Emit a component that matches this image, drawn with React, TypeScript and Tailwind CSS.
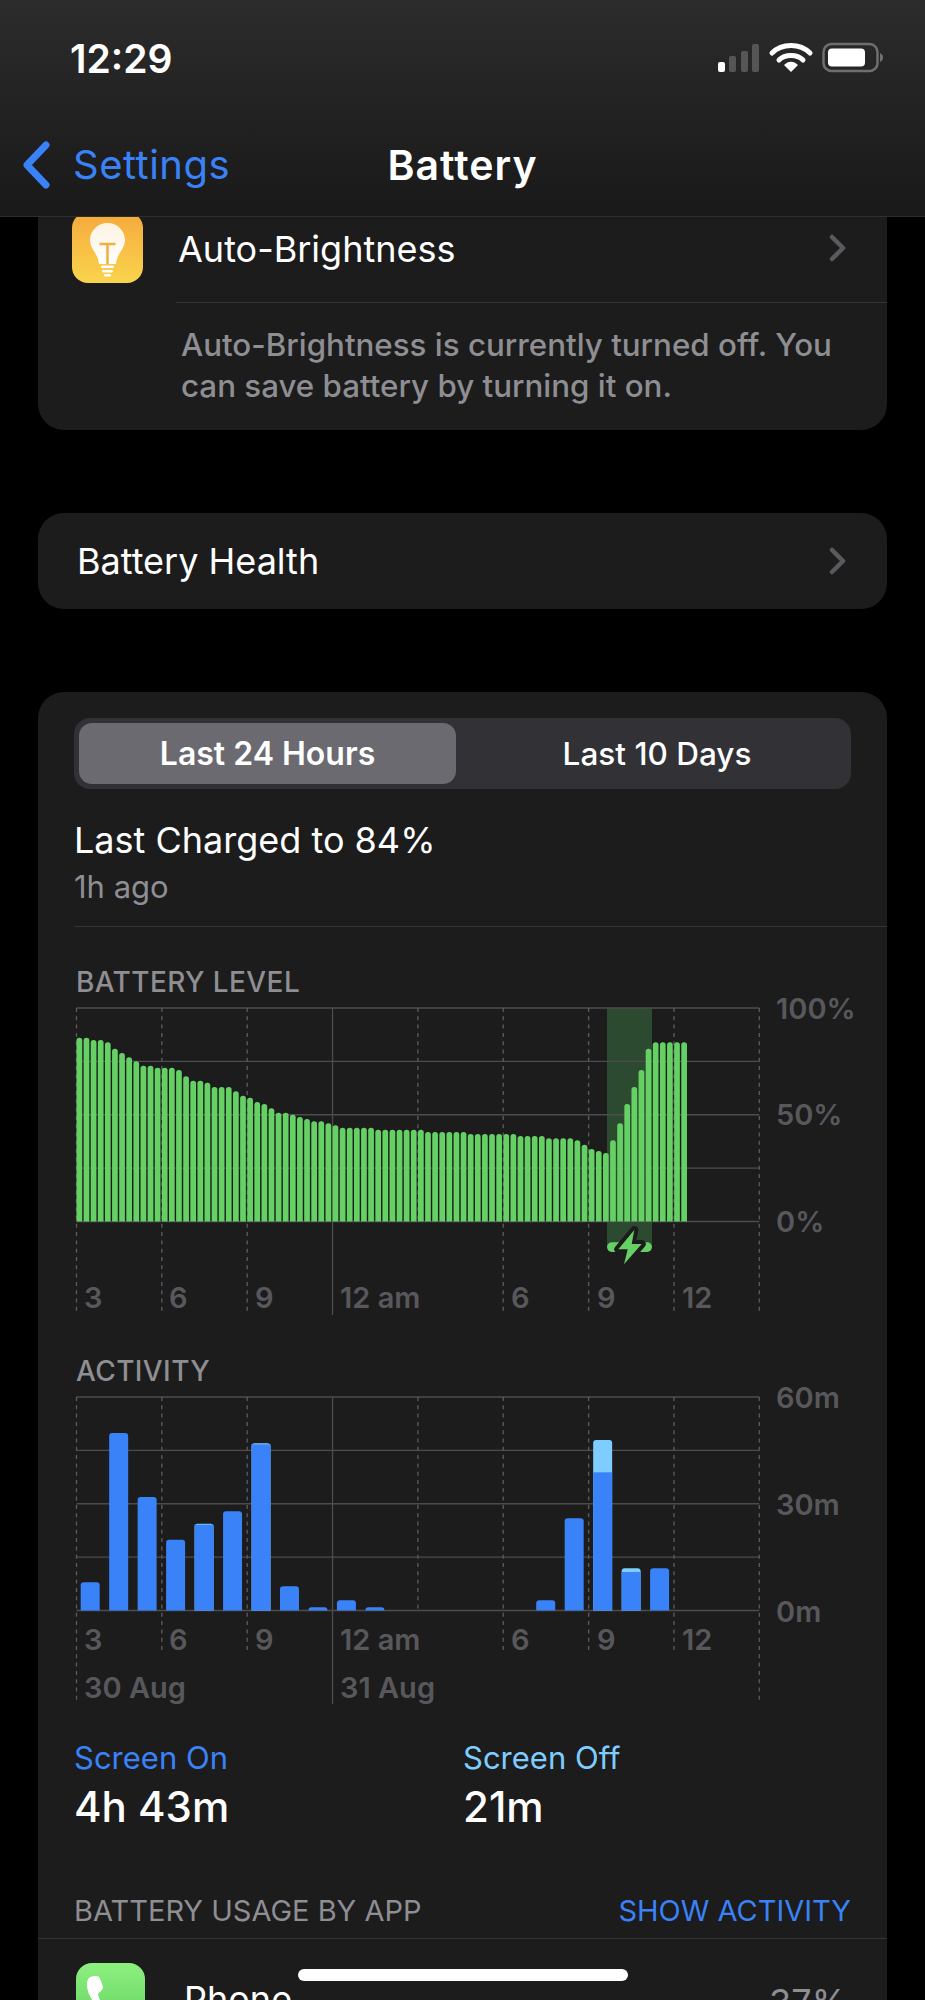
import React from "react";

// bar tops read off the reference, in svg units are (t / 3 - 39)
const levelTops = [
  233, 233, 240, 240, 247, 266, 279, 292, 304, 317, 317, 323, 323, 323, 330, 349, 362, 362, 368, 381, 381, 381,
  394, 407, 413, 426, 432, 445, 458, 458, 464, 471, 477, 484, 484, 490, 496, 503, 503, 503, 503, 503, 509, 509,
  509, 509, 509, 509, 509, 516, 516, 516, 516, 516, 516, 522, 522, 522, 522, 522, 522, 522, 528, 528, 528, 528,
  535, 535, 535, 535, 541, 554, 567, 573, 579, 541, 490, 432, 381, 330, 266, 247, 247, 247, 247, 247,
];

const activityBars: { slot: number; top: number; split?: number }[] = [
  { slot: 0, top: 727 },
  { slot: 1, top: 279 },
  { slot: 2, top: 471 },
  { slot: 3, top: 599 },
  { slot: 4, top: 551, split: 554 },
  { slot: 5, top: 514 },
  { slot: 6, top: 310, split: 313 },
  { slot: 7, top: 739 },
  { slot: 8, top: 802 },
  { slot: 9, top: 781 },
  { slot: 10, top: 802 },
  { slot: 16, top: 781 },
  { slot: 17, top: 535 },
  { slot: 18, top: 300, split: 397 },
  { slot: 19, top: 685, split: 696 },
  { slot: 20, top: 685 },
];

const X0 = 38.5;
const STEP = 85.35;
const GRID_TOP = 9;
const GRID_BOTTOM = 222.5;
const hours = [0, 1, 2, 3, 4, 5, 6, 7, 8];
const rows = [0, 1, 2, 3, 4];

function topRounded(x: number, y: number, w: number, bottom: number, r: number) {
  return `M${x} ${bottom}V${y + r}Q${x} ${y} ${x + r} ${y}H${x + w - r}Q${x + w} ${y} ${x + w} ${y + r}V${bottom}Z`;
}

function Grid({ midEnd, edgeEnd }: { midEnd: number; edgeEnd: number }) {
  return (
    <g>
      {rows.map((r) => {
        const y = GRID_TOP + ((GRID_BOTTOM - GRID_TOP) / 4) * r;
        return <line key={r} x1={X0} x2={X0 + STEP * 8} y1={y} y2={y} stroke="#4c4c4e" strokeWidth="1.3" />;
      })}
      {hours.map((h) => {
        const x = X0 + STEP * h;
        if (h === 3) {
          return <line key={h} x1={x} x2={x} y1={GRID_TOP} y2={316} stroke="#4c4c4e" strokeWidth="1.3" />;
        }
        // the line after midnight stops at the axis, the "12 am" label sits under it
        let end = midEnd;
        if (h === 0 || h === 8) end = edgeEnd;
        if (h === 4) end = GRID_BOTTOM;
        return (
          <line key={h} x1={x} x2={x} y1={GRID_TOP} y2={end} stroke="#5c5c5e" strokeWidth="1.3" strokeDasharray="4 4.3" />
        );
      })}
    </g>
  );
}

function AxisLabel({ x, y, children }: { x: number; y: number; children: React.ReactNode }) {
  return (
    <text x={x} y={y} className="fill-[#58585c] text-[29px] font-semibold">
      {children}
    </text>
  );
}

function HourLabels({ y }: { y: number }) {
  return (
    <>
      <AxisLabel x={46} y={y}>3</AxisLabel>
      <AxisLabel x={131} y={y}>6</AxisLabel>
      <AxisLabel x={217} y={y}>9</AxisLabel>
      <AxisLabel x={302} y={y}>12 am</AxisLabel>
      <AxisLabel x={473} y={y}>6</AxisLabel>
      <AxisLabel x={559} y={y}>9</AxisLabel>
      <AxisLabel x={644} y={y}>12</AxisLabel>
    </>
  );
}

function LevelChart() {
  return (
    <svg viewBox="0 0 849 320" className="block h-[320px] w-full overflow-visible">
      <rect x="569" y={GRID_TOP} width="45" height="239" fill="#2c4a2f" />
      <Grid midEnd={312} edgeEnd={312} />
      {levelTops.map((t, i) => (
        <path key={i} d={topRounded(38.5 + 7.115 * i, t / 3 - 39, 5.7, GRID_BOTTOM, 2.7)} fill="#65d165" />
      ))}
      <rect x="569" y="243.3" width="45" height="9.6" rx="4.8" fill="#65d165" />
      <path
        d="M596.3 231L580.3 250.3H589.7L586 265.3L603.7 245H593.7Z"
        fill="#65d165"
        stroke="#1c1c1c"
        strokeWidth="8"
        strokeLinejoin="round"
      />
      <path d="M596.3 231L580.3 250.3H589.7L586 265.3L603.7 245H593.7Z" fill="#65d165" />
      <AxisLabel x={738} y={20}>100%</AxisLabel>
      <AxisLabel x={738} y={126}>50%</AxisLabel>
      <AxisLabel x={738} y={233}>0%</AxisLabel>
      <HourLabels y={309} />
    </svg>
  );
}

function ActivityChart() {
  return (
    <svg viewBox="0 0 849 322" className="block h-[322px] w-full overflow-visible">
      <Grid midEnd={265} edgeEnd={312} />
      {activityBars.map((b) => {
        const x = 42.7 + 28.47 * b.slot;
        const y = b.top / 3 - 48;
        return (
          <g key={b.slot}>
            <path d={topRounded(x, y, 19, GRID_BOTTOM, 3)} fill={b.split ? "#7fcdff" : "#3a82f7"} />
            {b.split && <rect x={x} y={b.split / 3 - 48} width="19" height={GRID_BOTTOM - (b.split / 3 - 48)} fill="#3a82f7" />}
          </g>
        );
      })}
      <AxisLabel x={738} y={20}>60m</AxisLabel>
      <AxisLabel x={738} y={127}>30m</AxisLabel>
      <AxisLabel x={738} y={234}>0m</AxisLabel>
      <HourLabels y={262} />
      <AxisLabel x={46} y={310}>30 Aug</AxisLabel>
      <AxisLabel x={302} y={310}>31 Aug</AxisLabel>
    </svg>
  );
}

function StatusIcons() {
  return (
    <svg width="170" height="32" viewBox="0 0 170 32">
      <rect x="5" y="20" width="7" height="10" rx="2" fill="#fff" />
      <rect x="16" y="14" width="7" height="16" rx="2" fill="#565656" />
      <rect x="28" y="9" width="7" height="21" rx="2" fill="#565656" />
      <rect x="39" y="2" width="7" height="28" rx="2" fill="#565656" />
      <path d="M59 11C69 1 87 1 97 11" fill="none" stroke="#fff" strokeWidth="5" strokeLinecap="round" />
      <path d="M66 18C72 12 84 12 90 18" fill="none" stroke="#fff" strokeWidth="5" strokeLinecap="round" />
      <path d="M71 23C75 18.500 81 18.500 85 23L78 30Z" fill="#fff" />
      <rect x="110.500" y="2" width="54" height="27" rx="8" fill="none" stroke="#6f6f6f" strokeWidth="2.500" />
      <rect x="115" y="6.500" width="37" height="18" rx="4" fill="#fff" />
      <path d="M167 11C169.500 12 170 14 170 15.500C170 17 169.500 19 167 20Z" fill="#6f6f6f" />
    </svg>
  );
}

function Chevron() {
  return (
    <svg width="20" height="28" viewBox="0 0 20 28" className="shrink-0">
      <path d="M4 3L15 14L4 25" fill="none" stroke="#5a5a5e" strokeWidth="4.500" strokeLinecap="round" strokeLinejoin="round" />
    </svg>
  );
}

function BulbIcon() {
  return (
    <div className="h-[71px] w-[71px] shrink-0 rounded-[16px] bg-gradient-to-b from-[#f5a93d] to-[#f9d44d]">
      <svg width="71" height="71" viewBox="0 0 71 71">
        <defs>
          <linearGradient id="bulb" x1="0" y1="0" x2="0" y2="1">
            <stop offset="0" stopColor="#fdf3e0" />
            <stop offset="1" stopColor="#ffffff" />
          </linearGradient>
        </defs>
        <path d="M35.500 11C45 11 53 18.500 53 28C53 37 45 41 44 52H27C26 41 18 37 18 28C18 18.500 26 11 35.500 11Z" fill="url(#bulb)" />
        <path d="M27.500 32H43.500M35.500 32V52" fill="none" stroke="#f4ae3e" strokeWidth="2.500" />
        <rect x="29" y="53.500" width="13" height="2.500" rx="1.200" fill="#fff" />
        <rect x="30" y="58" width="11" height="2.500" rx="1.200" fill="#fff" />
        <rect x="32" y="62" width="7" height="2.500" rx="1.200" fill="#fff" />
      </svg>
    </div>
  );
}

function PhoneIcon() {
  return (
    <div className="h-[69px] w-[69px] shrink-0 rounded-[16px] bg-gradient-to-b from-[#8df07f] to-[#5ed05f]">
      <svg width="69" height="69" viewBox="0 0 69 69">
        <path
          d="M13 15C15 13 21 12 23 14C25 17 27 23 27 25C26 28 23 29 22 31C23 38 30 46 36 49C38 48 40 45 42 44C45 44 52 47 54 50C56 52 54 57 51 59C46 62 36 58 27 50C17 41 10 29 11 20C11 18 12 16 13 15Z"
          fill="#fff"
        />
      </svg>
    </div>
  );
}

export default function App() {
  return (
    <div className="relative h-[2000px] overflow-hidden bg-black text-white [font-family:Inter,'Liberation_Sans',sans-serif]">
      <header className="relative z-10 h-[217px] border-b border-[#2f2f30] bg-gradient-to-b from-[#2c2c2c] to-[#191919]">
        <div className="flex h-[130px] items-start justify-between pl-[70px] pr-[42px] pt-[36px]">
          <span className="text-[39px] font-semibold leading-[46px]">12:29</span>
          <div className="pt-[6px]">
            <StatusIcons />
          </div>
        </div>
        <div className="relative flex h-[70px] items-center justify-center">
          <div className="absolute left-[22px] top-0 flex h-full items-center gap-[23px] text-[#3a82f7]">
            <svg width="28" height="48" viewBox="0 0 28 48">
              <path d="M24 4L5 24L24 44" fill="none" stroke="#3a82f7" strokeWidth="7" strokeLinecap="round" strokeLinejoin="round" />
            </svg>
            <span className="text-[40px] leading-[44px] tracking-[0.5px]">Settings</span>
          </div>
          <span className="text-[41px] font-semibold leading-[44px] tracking-[1px]">Battery</span>
        </div>
      </header>

      <div className="mx-[38px] -mt-[45px] rounded-[26px] bg-[#1c1c1c] pt-[40px]">
        <div className="flex h-[71px] items-center pl-[34px] pr-[39px]">
          <BulbIcon />
          <span className="ml-[35px] flex-1 pt-[2px] text-[36px] leading-[44px]">Auto-Brightness</span>
          <Chevron />
        </div>
        <div className="ml-[138px] mt-[19px] h-px bg-[#343436]" />
        <p className="ml-[143px] mr-[40px] pt-[22px] pb-[23px] text-[31.3px] font-medium leading-[41px] text-[#8e8e93]">
          Auto-Brightness is currently turned off. You can save battery by turning it on.
        </p>
      </div>

      <div className="mx-[38px] mt-[83px] flex h-[96px] items-center rounded-[26px] bg-[#1c1c1c] pl-[39px] pr-[39px]">
        <span className="flex-1 text-[36px] leading-[44px]">Battery Health</span>
        <Chevron />
      </div>

      <div className="mx-[38px] mt-[83px] rounded-t-[26px] bg-[#1c1c1c] pt-[26px]">
        <div className="mx-[36px] flex h-[71px] items-center rounded-[16px] bg-[#323236] p-[5px]">
          <div className="flex h-full w-[377px] items-center justify-center rounded-[13px] bg-[#6a6a70] text-[32px] font-semibold">
            Last 24 Hours
          </div>
          <div className="flex h-full flex-1 items-center justify-center pl-[12px] text-[31.5px] font-medium">Last 10 Days</div>
        </div>
        <div className="ml-[36px] mt-[29px] text-[36px] leading-[44px]">Last Charged to 84%</div>
        <div className="ml-[36px] mt-[5px] text-[31px] leading-[40px] text-[#8e8e93]">1h ago</div>
        <div className="ml-[36px] mt-[19px] h-px bg-[#343436]" />
        <div className="ml-[38px] mt-[38px] text-[28px] font-medium leading-[34px] tracking-[0.4px] text-[#8e8e93]">BATTERY LEVEL</div>
        <LevelChart />
        <div className="ml-[38px] mt-[35px] text-[28px] font-medium leading-[34px] tracking-[0.4px] text-[#8e8e93]">ACTIVITY</div>
        <ActivityChart />
        <div className="ml-[36px] mt-[28px] flex">
          <div className="w-[389px]">
            <div className="text-[31px] leading-[40px] text-[#3a82f7]">Screen On</div>
            <div className="mt-[4px] text-[42px] font-medium leading-[50px]">4h 43m</div>
          </div>
          <div>
            <div className="text-[31px] leading-[40px] text-[#7fcdff]">Screen Off</div>
            <div className="mt-[4px] text-[42px] font-medium leading-[50px]">21m</div>
          </div>
        </div>
        <div className="mx-[36px] mt-[61px] flex justify-between text-[29px] leading-[36px]">
          <span className="text-[#8e8e93]">BATTERY USAGE BY APP</span>
          <span className="text-[#3a82f7]">SHOW ACTIVITY</span>
        </div>
        <div className="mt-[9px] h-px bg-[#343436]" />
        <div className="flex pl-[38px] pr-[40px] pt-[24px]">
          <PhoneIcon />
          <span className="ml-[39px] mt-[14px] flex-1 text-[36px] leading-[44px]">Phone</span>
          <span className="mt-[17px] text-[36px] leading-[44px] text-[#8e8e93]">37%</span>
        </div>
      </div>

      <div className="absolute left-[298px] top-[1969px] z-20 h-[12px] w-[330px] rounded-full bg-white" />
    </div>
  );
}
